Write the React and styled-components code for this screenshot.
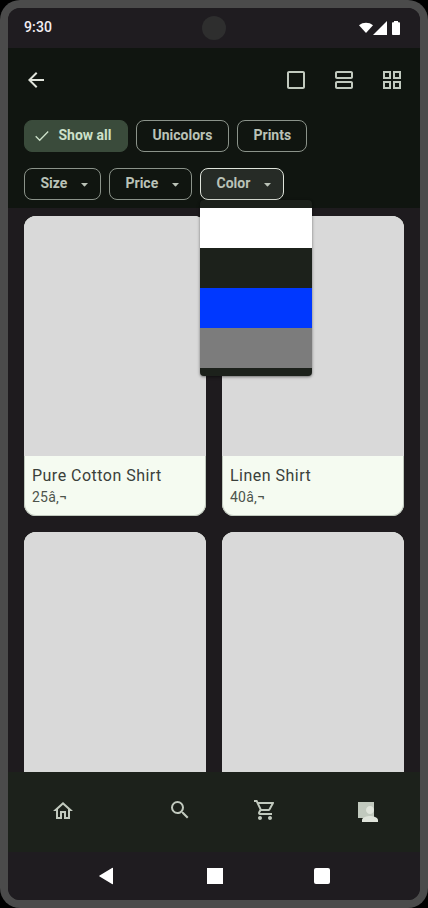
import React from 'react';
import styled, { createGlobalStyle, css } from 'styled-components';

const GlobalStyle = createGlobalStyle`
  * { box-sizing: border-box; }
  body { margin: 0; background: #000; font-family: Roboto, "Liberation Sans", sans-serif; }
`;

const Device = styled.div`
  width: 428px;
  height: 908px;
  padding: 8px;
  background: #4b4b4b;
  border-radius: 20px;
`;

const Screen = styled.div`
  height: 892px;
  display: flex;
  flex-direction: column;
  border-radius: 12px;
  overflow: hidden;
  background: #1e1b1e;
`;

const StatusBar = styled.header`
  height: 40px;
  flex: none;
  display: grid;
  grid-template-columns: 1fr 24px 1fr;
  align-items: center;
  padding: 0 16px;
  background: #1f1c20;
`;

const Time = styled.span`
  color: #f2edf2;
  font-size: 14px;
  font-weight: 500;
  line-height: 20px;
  letter-spacing: 0.14px;
  padding-bottom: 2px;
`;

const Camera = styled.div`
  width: 24px;
  height: 24px;
  border-radius: 50%;
  background: #2e2e2e;
`;

const StatusIcons = styled.svg`
  justify-self: end;
  margin-right: 4px;
  fill: #fff;
`;

const TopBar = styled.section`
  height: 160px;
  flex: none;
  background: #101510;
`;

const ActionRow = styled.div`
  height: 64px;
  display: flex;
  align-items: center;
  gap: 24px;
  padding: 0 16px;
`;

const IconButton = styled.button`
  width: 24px;
  height: 24px;
  padding: 0;
  border: 0;
  background: none;
  color: ${(p) => (p.$strong ? '#e0e4db' : '#c1c9be')};
  ${(p) => p.$strong && css`margin-right: auto;`}
`;

const Icon = styled.svg`
  display: block;
  width: 24px;
  height: 24px;
  fill: currentColor;
`;

const ChipRow = styled.div`
  display: flex;
  gap: 8px;
  padding: 8px 16px;
`;

const Chip = styled.button`
  width: ${(p) => p.$width}px;
  height: 32px;
  display: flex;
  align-items: center;
  padding: 0 0 2px ${(p) => (p.$selected ? 10 : 15.5)}px;
  border: 1px solid #8b938a;
  border-radius: 8px;
  background: transparent;
  color: #bac2b7;
  font: 700 14px/20px Roboto, sans-serif;
  white-space: nowrap;
  ${(p) => p.$selected && css`
    border-color: #3a4b3b;
    background: #3a4b3b;
    color: #cde1ca;
  `}
  ${(p) => p.$open && css`
    border-color: #dfe4db;
    background: #262b26;
  `}
`;

const CheckIcon = styled.svg`
  width: 14px;
  height: 12px;
  margin: 2px 9.5px 0 0;
  fill: none;
  stroke: currentColor;
  stroke-width: 1.3;
`;

const Caret = styled.svg`
  width: 7px;
  height: 4px;
  margin: 3px 12.5px 0 auto;
  fill: currentColor;
`;

const MenuAnchor = styled.div`
  position: relative;
`;

const ColorMenu = styled.div`
  position: absolute;
  z-index: 2;
  top: 32px;
  left: 0;
  width: 112px;
  padding: 8px 0;
  border-radius: 4px;
  background: #1c211b;
  box-shadow: 0 1px 2px rgba(0, 0, 0, 0.3), 0 1px 3px 1px rgba(0, 0, 0, 0.15);
`;

const Swatch = styled.div`
  height: 40px;
  background: ${(p) => p.$color};
`;

const Products = styled.main`
  height: 564px;
  flex: none;
  display: grid;
  grid-template-columns: 182px 182px;
  grid-auto-rows: 300px;
  gap: 16px;
  padding: 8px 16px 0;
  overflow: hidden;
`;

const Card = styled.article`
  border-radius: 12px;
  overflow: hidden;
  background: #f5fbf1;
  box-shadow: inset 0 0 0 1px #c1c9be;
`;

const Photo = styled.div`
  height: 240px;
  background: #d9d9d9;
`;

const CardText = styled.div`
  padding: 8px;
`;

const ProductName = styled.div`
  color: #3a403a;
  font-size: 16px;
  line-height: 24px;
  letter-spacing: 0.48px;
`;

const ProductPrice = styled.div`
  margin-top: -1px;
  color: #4d544c;
  font-size: 14px;
  line-height: 20px;
  letter-spacing: 0.25px;
`;

const BottomBar = styled.nav`
  height: 80px;
  flex: none;
  display: flex;
  align-items: flex-start;
  padding: 26px 38px 0 43px;
  background: #1c211b;
`;

const Tab = styled.a`
  color: #c1c9be;
  margin: ${(p) => p.$top || 0}px 0 0 ${(p) => p.$gap || 0}px;
`;

const SystemBar = styled.footer`
  height: 48px;
  flex: none;
  display: flex;
  align-items: center;
  padding-left: 91px;
  background: #1f1c20;
`;

const BackKey = styled.svg`
  width: 14px;
  height: 18px;
  fill: #fff;
`;

const SquareKey = styled.div`
  width: 16px;
  height: 16px;
  margin-left: ${(p) => p.$gap}px;
  border-radius: ${(p) => p.$radius}px;
  background: #fff;
`;

const glyphs = {
  back: 'M20 11H7.83l5.59-5.59L12 4l-8 8 8 8 1.41-1.41L7.83 13H20v-2z',
  home: 'M12 5.69l5 4.5V18h-2v-6H9v6H7v-7.81l5-4.5M12 3L2 12h3v8h6v-6h2v6h6v-8h3L12 3z',
  search: 'M15.5 14h-.79l-.28-.27A6.471 6.471 0 0 0 16 9.5 6.5 6.5 0 1 0 9.5 16c1.61 0 3.09-.59 4.23-1.57l.27.28v.79l5 4.99L20.49 19l-4.99-5zm-6 0C7.01 14 5 11.99 5 9.5S7.01 5 9.5 5 14 7.01 14 9.5 11.99 14 9.5 14z',
  cart: 'M15.55 13c.75 0 1.41-.41 1.75-1.03l3.58-6.49A.996.996 0 0 0 20.01 4H5.21l-.94-2H1v2h2l3.6 7.59-1.35 2.44C4.52 15.37 5.48 17 7 17h12v-2H7l1.1-2h7.45zM6.16 6h12.15l-2.76 5H8.53L6.16 6zM7 18c-1.1 0-1.99.9-1.99 2S5.9 22 7 22s2-.9 2-2-.9-2-2-2zm10 0c-1.1 0-1.99.9-1.99 2s.89 2 1.99 2 2-.9 2-2-.9-2-2-2z',
  single: 'M19 3H5c-1.1 0-2 .9-2 2v14c0 1.1.9 2 2 2h14c1.1 0 2-.9 2-2V5c0-1.1-.9-2-2-2zm0 16H5V5h14v14z',
  rows: 'M19 13H5c-1.1 0-2 .9-2 2v4c0 1.1.9 2 2 2h14c1.1 0 2-.9 2-2v-4c0-1.1-.9-2-2-2zm0 6H5v-4h14v4zM19 3H5c-1.1 0-2 .9-2 2v4c0 1.1.9 2 2 2h14c1.1 0 2-.9 2-2V5c0-1.1-.9-2-2-2zm0 6H5V5h14v4z',
  grid: 'M3 3v8h8V3H3zm6 6H5V5h4v4zm-6 4v8h8v-8H3zm6 6H5v-4h4v4zm4-16v8h8V3h-8zm6 6h-4V5h4v4zm-6 4v8h8v-8h-8zm6 6h-4v-4h4v4z',
};

function Glyph({ name }) {
  return (
    <Icon viewBox="0 0 24 24">
      <path d={glyphs[name]} />
    </Icon>
  );
}

function DropChip({ label, width, open }) {
  return (
    <Chip $width={width} $open={open}>
      {label}
      <Caret viewBox="0 0 7 4"><path d="M0 0h7L4 3.200q-.5.500-1 0z" /></Caret>
    </Chip>
  );
}

function Product({ name, price }) {
  return (
    <Card>
      <Photo />
      <CardText>
        <ProductName>{name}</ProductName>
        <ProductPrice>{price}</ProductPrice>
      </CardText>
    </Card>
  );
}

export default function App() {
  return (
    <Device>
      <GlobalStyle />
      <Screen>
        <StatusBar>
          <Time>9:30</Time>
          <Camera />
          <StatusIcons width="41" height="14" viewBox="0 0 41 14">
            <path d="M0 4.2C4 .9 10 .9 14 4.2L7 12z" />
            <path d="M28 0v14H14z" />
            <path d="M35 1.3V0h4v1.3h1.2q.8 0 .8.8v11.1q0 .8-.8.8h-6.4q-.8 0-.8-.8V2.1q0-.8.8-.8z" />
          </StatusIcons>
        </StatusBar>
        <TopBar>
          <ActionRow>
            <IconButton $strong aria-label="Back"><Glyph name="back" /></IconButton>
            <IconButton aria-label="Single view"><Glyph name="single" /></IconButton>
            <IconButton aria-label="Row view"><Glyph name="rows" /></IconButton>
            <IconButton aria-label="Grid view"><Glyph name="grid" /></IconButton>
          </ActionRow>
          <ChipRow>
            <Chip $width={104} $selected>
              <CheckIcon viewBox="0 0 14 12"><path d="M.7 6.3l4 4L13.2 1.5" /></CheckIcon>
              Show all
            </Chip>
            <Chip $width={93}>Unicolors</Chip>
            <Chip $width={70}>Prints</Chip>
          </ChipRow>
          <ChipRow>
            <DropChip label="Size" width={77} />
            <DropChip label="Price" width={83} />
            <MenuAnchor>
              <DropChip label="Color" width={84} open />
              <ColorMenu>
                <Swatch $color="#ffffff" />
                <Swatch $color="#1c211b" />
                <Swatch $color="#0038ff" />
                <Swatch $color="#7c7c7c" />
              </ColorMenu>
            </MenuAnchor>
          </ChipRow>
        </TopBar>
        <Products>
          <Product name="Pure Cotton Shirt" price="25â‚¬" />
          <Product name="Linen Shirt" price="40â‚¬" />
          <Product />
          <Product />
        </Products>
        <BottomBar>
          <Tab $top={1}><Glyph name="home" /></Tab>
          <Tab $gap={93}><Glyph name="search" /></Tab>
          <Tab $gap={61}><Glyph name="cart" /></Tab>
          <Tab $gap={81} $top={4}>
            <Icon viewBox="0 0 24 24">
              <path d="M0 0h16v16H0z" />
              <path fill="#dfe4db" d="M12 12c2.21 0 4-1.79 4-4s-1.79-4-4-4-4 1.79-4 4 1.79 4 4 4zm0 2c-2.67 0-8 1.34-8 4v2h16v-2c0-2.66-5.33-4-8-4z" />
            </Icon>
          </Tab>
        </BottomBar>
        <SystemBar>
          <BackKey viewBox="0 0 14 18"><path d="M13 1q1-.6 1 .6v14.800q0 1.200-1 .6L.6 9.600q-.9-.6 0-1.200z" /></BackKey>
          <SquareKey $gap={94} $radius={0} />
          <SquareKey $gap={91} $radius={2} />
        </SystemBar>
      </Screen>
    </Device>
  );
}
